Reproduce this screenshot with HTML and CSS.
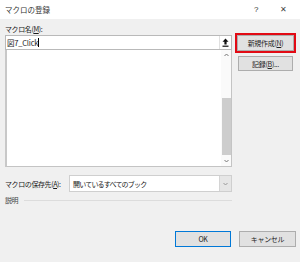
FILE: index.html
```html
<!DOCTYPE html>
<html lang="ja">
<head>
  <meta charset="UTF-8" />
  <title>マクロの登録</title>
  <link rel="stylesheet" href="styles.css">
</head>
<body>
  <div class="titlebar">
    <span class="title">マクロの登録</span>
    <span class="help">?</span>
    <span class="close">&#x2715;</span>
  </div>

  <div class="main">
    <div class="left">
      <div class="label">マクロ名(<u>M</u>):</div>
      <div class="namebox">
        <span class="name">図7_Click</span><span class="caret"></span>
        <span class="collapse">
          <svg width="7" height="9" viewBox="0 0 7 9">
            <path d="M3.5 0.5 L6.5 3.8 L4.6 3.8 L4.6 6.6 L2.4 6.6 L2.4 3.8 L0.5 3.8 Z" fill="#111"/>
            <rect x="0.5" y="7.6" width="6" height="1.2" fill="#111"/>
          </svg>
        </span>
      </div>
      <div class="list">
        <div class="scrollbar">
          <svg class="arrow" width="7" height="10" viewBox="0 0 7 10">
            <path d="M1.5 6 L3.5 4 L5.5 6" fill="none" stroke="#777" stroke-width="1"/>
          </svg>
          <span class="thumb"></span>
          <svg class="arrow" width="7" height="10" viewBox="0 0 7 10">
            <path d="M1.5 4 L3.5 6 L5.5 4" fill="none" stroke="#777" stroke-width="1"/>
          </svg>
        </div>
      </div>

      <div class="saverow">
        <span class="label">マクロの保存先(<u>A</u>):</span>
        <div class="select">
          <span class="value">開いているすべてのブック</span>
          <span class="dropdown">
            <svg width="7" height="10" viewBox="0 0 7 10">
              <path d="M1.5 4 L3.5 6 L5.5 4" fill="none" stroke="#999" stroke-width="1"/>
            </svg>
          </span>
        </div>
      </div>

      <div class="descrow">
        <span class="label">説明</span>
        <span class="rule"></span>
      </div>
    </div>

    <div class="side">
      <button class="btn btn-new">新規作成(<u>N</u>)</button>
      <button class="btn btn-record">記録(<u>B</u>)...</button>
    </div>
  </div>

  <div class="footer">
    <button class="btn btn-ok">OK</button>
    <button class="btn btn-cancel">キャンセル</button>
  </div>
</body>
</html>
```

FILE: styles.css
```css
body {
  margin: 0;
  width: 300px;
  height: 262px;
  background-color: #f0f0f0;
  color: #1a1a1a;
  font-family: "Noto Sans CJK JP", "Noto Sans", sans-serif;
  font-size: 7px;
  display: flex;
  flex-direction: column;
  overflow: hidden;
}

u {
  text-decoration-thickness: 1px;
  text-underline-offset: 1px;
}

.titlebar {
  height: 19px;
  background-color: #fff;
  display: flex;
  align-items: center;
  padding: 0 0 0 5px;
  font-size: 7.5px;
  color: #333;
}

.title {
  flex: 1;
}

.help {
  width: 10px;
  margin-right: 16px;
  font-family: "Liberation Sans", sans-serif;
  font-size: 8px;
}

.close {
  width: 12px;
  margin-right: 8px;
  font-family: "DejaVu Sans", sans-serif;
  font-size: 8px;
  color: #444;
}

.main {
  display: flex;
  gap: 4px;
  padding: 4px 0 0 5px;
}

.left {
  width: 227px;
  display: flex;
  flex-direction: column;
}

.label {
  height: 12px;
  line-height: 12px;
  letter-spacing: -0.4px;
}

.namebox {
  box-sizing: border-box;
  height: 15px;
  background-color: #fff;
  border: 1px solid #b9b9b9;
  display: flex;
  align-items: center;
  padding-left: 1px;
}

.name {
  font-size: 7.5px;
  letter-spacing: -0.2px;
}

.caret {
  width: 1px;
  height: 9px;
  background-color: #000;
}

.collapse {
  margin-left: auto;
  width: 11px;
  height: 13px;
  border-left: 1px solid #e0e0e0;
  display: flex;
  align-items: center;
  justify-content: center;
}

.list {
  box-sizing: border-box;
  height: 117px;
  background-color: #fff;
  border: 1px solid #c4c4c4;
  border-top: none;
  border-left: 2px solid #c8c8c8;
  display: flex;
  justify-content: flex-end;
}

.scrollbar {
  width: 10px;
  display: flex;
  flex-direction: column;
  align-items: center;
  background-color: #fafafa;
}

.arrow {
  display: block;
  flex: none;
}

.thumb {
  width: 9px;
  height: 57px;
  margin-top: 38px;
  margin-bottom: auto;
  background-color: #cdcdcd;
}

.saverow {
  margin-top: 8px;
  height: 17px;
  display: flex;
  align-items: center;
}

.saverow .label {
  width: 64px;
}

.select {
  box-sizing: border-box;
  flex: 1;
  height: 17px;
  background-color: #fff;
  border: 1px solid #cfcfcf;
  display: flex;
  align-items: center;
  padding-left: 3px;
}

.value {
  flex: 1;
  letter-spacing: -0.8px;
}

.dropdown {
  width: 11px;
  height: 15px;
  background-color: #e6e6e6;
  border-left: 1px solid #d4d4d4;
  display: flex;
  align-items: center;
  justify-content: center;
}

.descrow {
  margin-top: 3px;
  height: 10px;
  display: flex;
  align-items: center;
  gap: 6px;
}

.descrow .label {
  color: #444;
}

.rule {
  flex: 1;
  height: 1px;
  background-color: #dcdcdc;
}

.side {
  width: 59px;
  display: flex;
  flex-direction: column;
}

.btn {
  box-sizing: border-box;
  padding: 0;
  font-family: "Noto Sans CJK JP", "Noto Sans", sans-serif;
  font-size: 7px;
  color: #222;
  background-color: #e1e1e1;
  border: 1px solid #adadad;
  letter-spacing: -0.3px;
}

.btn-new {
  margin-top: 12px;
  margin-left: 1px;
  width: 57px;
  height: 16px;
  outline: 2px solid #e20a14;
  outline-offset: 0;
}

.btn-record {
  margin-top: 5px;
  margin-left: 2px;
  width: 55px;
  height: 15px;
}

.footer {
  margin-top: auto;
  padding: 0 4px 15px 0;
  display: flex;
  justify-content: flex-end;
  gap: 8px;
}

.btn-ok {
  width: 56px;
  height: 16px;
  border-color: #0078d7;
}

.btn-cancel {
  width: 57px;
  height: 16px;
}
```
